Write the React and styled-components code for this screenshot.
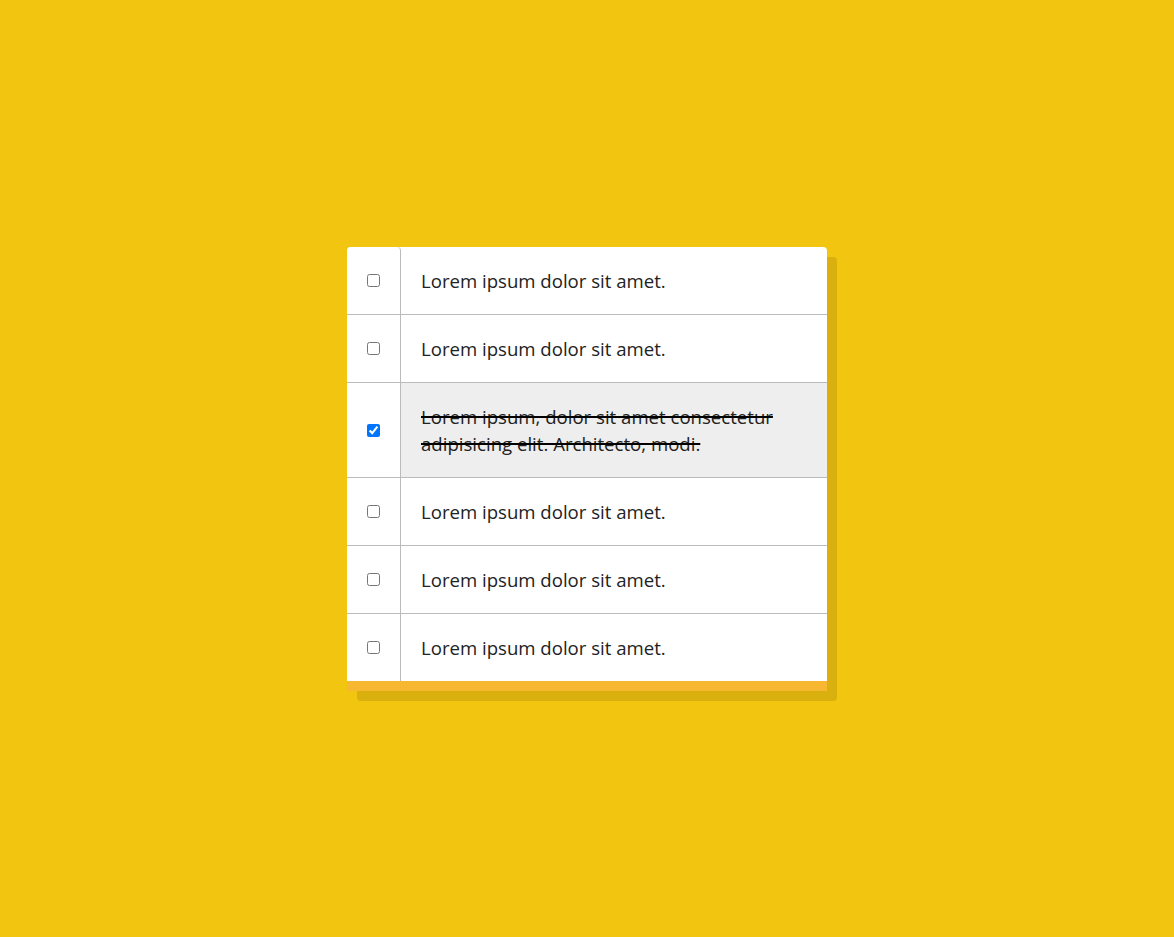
import styled, {createGlobalStyle} from "styled-components";
import {useState} from "react";

const initialItems = [
    {id: 1, text: 'Lorem ipsum dolor sit amet.', done: false},
    {id: 2, text: 'Lorem ipsum dolor sit amet.', done: false},
    {id: 3, text: 'Lorem ipsum, dolor sit amet consectetur adipisicing elit. Architecto, modi.', done: true},
    {id: 4, text: 'Lorem ipsum dolor sit amet.', done: false},
    {id: 5, text: 'Lorem ipsum dolor sit amet.', done: false},
    {id: 6, text: 'Lorem ipsum dolor sit amet.', done: false},
]

const App = () => {
    const [items, setItems] = useState(initialItems)

    const toggle = (id) => {
        setItems(items.map(item => item.id === id ? {...item, done: !item.done} : item))
    }

    return (
        <>
            <GlobalStyle/>
            <Page>
                <Card>
                    {items.map((item, i) => (
                        <Row key={item.id} $done={item.done} $last={i === items.length - 1}>
                            <CheckCell>
                                <input type="checkbox" checked={item.done} onChange={() => toggle(item.id)}/>
                            </CheckCell>
                            <TextCell $done={item.done}>{item.text}</TextCell>
                        </Row>
                    ))}
                    <BottomBar/>
                </Card>
            </Page>
        </>
    );
}

const GlobalStyle = createGlobalStyle`
    body {
        margin: 0;
        background: #f2c511;
        font-family: "Open Sans", "Noto Sans", sans-serif;
    }
`

const Page = styled.div`
    min-height: 100vh;
    display: flex;
    justify-content: center;
    padding-top: 247px;
    box-sizing: border-box;
`

const Card = styled.div`
    position: relative;
    z-index: 0;
    width: 480px;
    align-self: flex-start;
    border-radius: 4px 4px 0 0;

    &::before {
        content: '';
        position: absolute;
        left: 10px;
        top: 10px;
        right: -10px;
        bottom: -10px;
        background: #d9b00e;
        border-radius: 4px;
        z-index: -1;
    }
`

const Row = styled.div`
    display: flex;
    background: ${p => p.$done ? '#eeeeee' : '#fff'};
    border-bottom: ${p => p.$last ? 'none' : '1px solid #bbbbbb'};
    &:first-child {
        border-radius: 4px 4px 0 0;
    }
`

const CheckCell = styled.div`
    width: 53px;
    flex-shrink: 0;
    display: flex;
    align-items: center;
    justify-content: center;
    background: #fff;
    border-right: 1px solid #bbbbbb;
    border-radius: inherit;

    input {
        margin: 0;
        width: 13px;
        height: 13px;
    }
`

const TextCell = styled.div`
    flex: 1;
    padding: 20px 20px;
    font-size: 18.6px;
    line-height: 27px;
    color: #222;
    border-radius: 0 4px 0 0;
    text-decoration: ${p => p.$done ? 'line-through' : 'none'};
    text-decoration-color: #000;
    text-decoration-thickness: 2px;
`

const BottomBar = styled.div`
    height: 10px;
    background: #f7b731;
`

export default App;
